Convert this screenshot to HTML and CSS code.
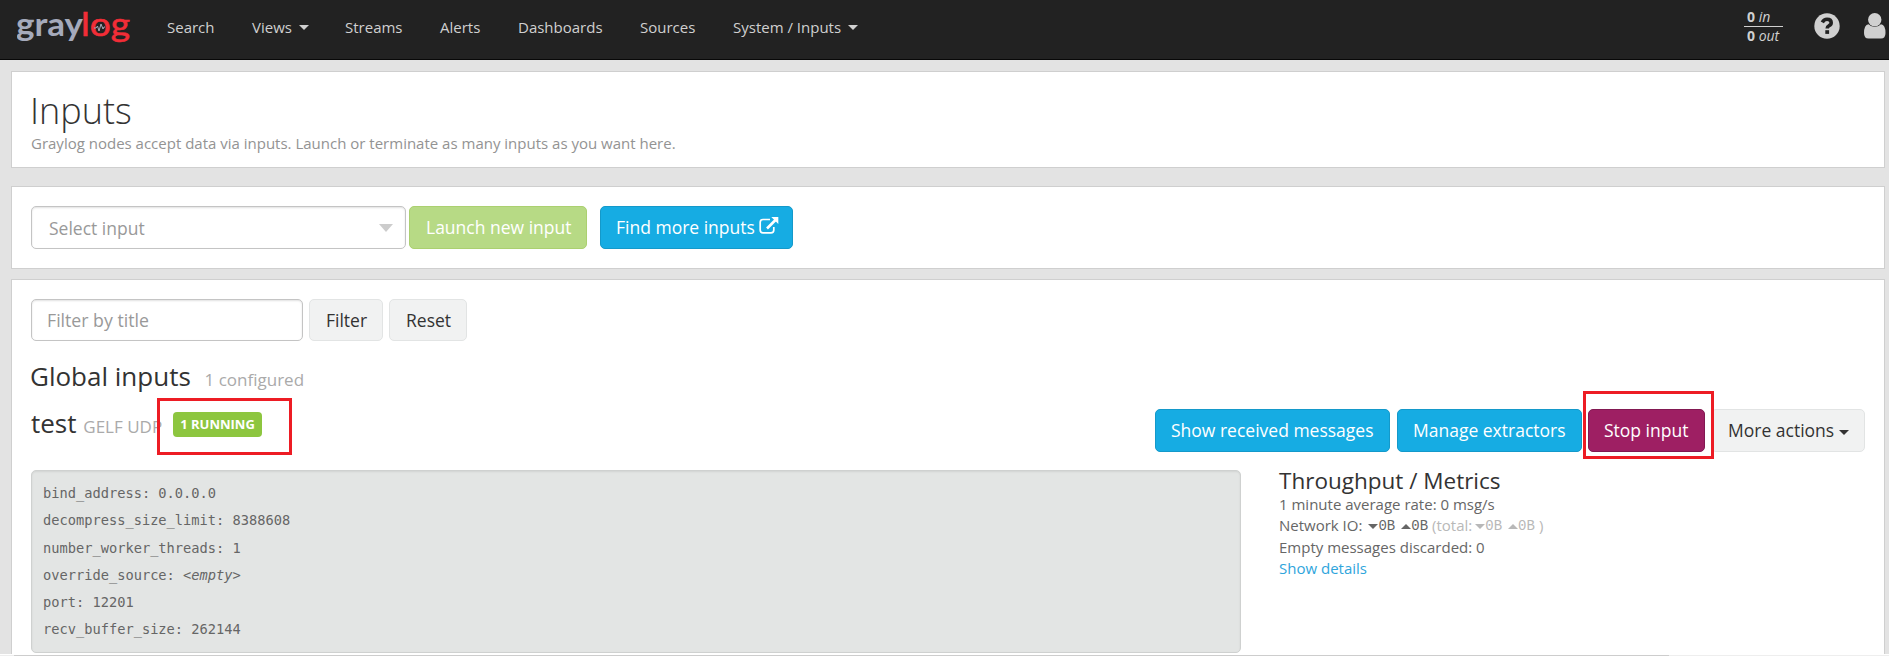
FILE: index.html
```html
<!DOCTYPE html>
<html lang="en">
<head>
<meta charset="utf-8">
<title>Inputs</title>
<link rel="stylesheet" href="styles.css">
</head>
<body>
<nav class="navbar">
  <a class="brand">
    <svg class="logo" width="124" height="46" viewBox="0 0 124 46">
      <text class="logo-gray" x="-1" y="36" textLength="67" lengthAdjust="spacingAndGlyphs">gray</text>
      <text class="logo-red" x="64" y="36" textLength="49" lengthAdjust="spacingAndGlyphs">log</text>
      <path class="pulse" d="M77 28h2l1.500-2 1.500 5 2-7 2 5 1-2h1"/>
    </svg>
  </a>
  <ul class="nav">
    <li class="w-search">Search</li>
    <li class="w-views">Views<span class="caret"></span></li>
    <li class="w-streams">Streams</li>
    <li class="w-alerts">Alerts</li>
    <li class="w-dash">Dashboards</li>
    <li class="w-sources">Sources</li>
    <li>System / Inputs<span class="caret"></span></li>
  </ul>
  <div class="throughput">
    <div class="rate rate-in"><b>0</b> <i>in</i></div>
    <div class="rate"><b>0</b> <i>out</i></div>
  </div>
  <svg class="help" width="26" height="26" viewBox="0 0 26 26"><circle cx="13" cy="13" r="12.700" fill="#d0d0d0"/><path d="M8.300 9.300Q10 6.200 13 6.200Q17.200 6.200 17.200 9.700Q17.200 11.600 15 12.700Q13.200 13.700 13.200 15.500" fill="none" stroke="#222" stroke-width="3.600"/><rect x="11.300" y="17.200" width="3.800" height="3.700" fill="#222"/></svg>
  <svg class="user" width="22" height="26" viewBox="0 0 22 26"><path d="M4.500 11.200Q0 12 0 20Q0 25.500 4.500 25.500H17Q21.500 25.500 21.500 20Q21.500 12 17 11.200Q14.500 13.900 10.750 13.900T4.500 11.200Z" fill="#d0d0d0"/><circle cx="10.750" cy="6.700" r="6.700" fill="#d0d0d0"/></svg>
</nav>

<main class="content">
  <section class="panel panel-head">
    <h1>Inputs</h1>
    <p class="lead">Graylog nodes accept data via inputs. Launch or terminate as many inputs as you want here.</p>
  </section>

  <section class="panel panel-create">
    <div class="select"><span>Select input</span><span class="select-arrow"></span></div>
    <a class="btn btn-success">Launch new input</a>
    <a class="btn btn-info btn-find">Find more inputs
      <svg class="ext" width="20" height="18" viewBox="0 0 20 18"><path d="M11 2.500H4Q1.200 2.500 1.200 5.300V13Q1.200 15.800 4 15.800H12Q14.800 15.800 14.800 13V10" fill="none" stroke="#fff" stroke-width="1.700"/><path d="M8 11.500L16.500 3" stroke="#fff" stroke-width="2.600"/><path d="M12.300 0H19.300V7Z" fill="#fff"/></svg>
    </a>
  </section>

  <section class="panel panel-list">
    <div class="filter">
      <div class="input">Filter by title</div>
      <a class="btn btn-default btn-filter">Filter</a>
      <a class="btn btn-default btn-reset">Reset</a>
    </div>
    <h2 class="group">Global inputs <small>1 configured</small></h2>
    <div class="entry">
      <h2 class="title">test <small>GELF UDP</small></h2>
      <span class="label">1 RUNNING</span>
      <span class="mark mark-label"></span>
      <div class="actions">
        <a class="btn btn-info btn-show">Show received messages</a>
        <a class="btn btn-info btn-manage">Manage extractors</a>
        <a class="btn btn-primary">Stop input</a>
        <a class="btn btn-default btn-more">More actions<span class="caret"></span></a>
        <span class="mark mark-stop"></span>
      </div>
    </div>
    <div class="details">
      <ul class="config">
        <li>bind_address: 0.0.0.0</li>
        <li>decompress_size_limit: 8388608</li>
        <li>number_worker_threads: 1</li>
        <li>override_source: <i>&lt;empty&gt;</i></li>
        <li>port: 12201</li>
        <li>recv_buffer_size: 262144</li>
      </ul>
      <div class="metrics">
        <h3>Throughput / Metrics</h3>
        <p>1 minute average rate: 0 msg/s</p>
        <p class="io"><span class="io-name">Network IO:</span><span class="down"></span><code>0B</code><span class="up"></span><code>0B</code><span class="total"><span class="total-name">(total:</span><span class="down"></span><code>0B</code><span class="up"></span><code>0B</code><span class="close">)</span></span></p>
        <p>Empty messages discarded: 0</p>
        <p><a class="link">Show details</a></p>
      </div>
    </div>
  </section>
</main>
<div class="scroll"><div class="scroll-track"><div class="scroll-thumb"></div></div></div>
</body>
</html>
```

FILE: styles.css
```css
* { box-sizing: border-box; }
body {
  margin: 0;
  height: 656px;
  overflow: hidden;
  display: flex;
  flex-direction: column;
  background: #e3e3e3;
  color: #666;
  font: 15px/21.4px "Open Sans", sans-serif;
}
h1, h2, h3, p, ul { margin: 0; padding: 0; font-weight: 400; }
ul { list-style: none; }

.navbar {
  flex: none;
  height: 60px;
  display: flex;
  background: #222;
  border-bottom: 1px solid #080808;
  color: #d0d0d0;
}
.brand { width: 167px; padding-left: 17px; }
.logo { display: block; }
.logo text { font: 700 33px Lato, sans-serif; }
.logo .logo-gray { fill: #a5aabb; }
.logo .logo-red { fill: #f22d37; font-weight: 400; stroke: #f22d37; stroke-width: .6px; }
.pulse { fill: none; stroke: #a5aabb; stroke-width: 1; }
.nav { display: flex; width: 1576px; padding-top: 17px; }
.nav li { white-space: nowrap; }
.w-search { width: 85px; }
.w-views { width: 93px; }
.w-streams { width: 95px; }
.w-alerts { width: 78px; }
.w-dash { width: 122px; }
.w-sources { width: 93px; }
.caret {
  display: inline-block;
  border: 5px solid transparent;
  border-top-color: currentColor;
  border-bottom: 0;
  margin-left: 7px;
  vertical-align: 3px;
}
.throughput { width: 41px; margin-left: 1px; padding-top: 8px; font-size: 14px; line-height: 18px; }
.rate { padding-left: 3px; width: 39px; height: 17px; white-space: nowrap; }
.rate-in { height: 19px; border-bottom: 1px solid #d0d0d0; }
.help { flex: none; margin: 13px 0 0 29px; }
.user { flex: none; margin: 13px 0 0 24px; }

.content { flex: 1; padding: 11px 4px 0 11px; display: flex; flex-direction: column; min-height: 0; }
.panel { flex: none; background: #fff; border: 1px solid #cfcfcf; padding: 19px; }
.panel-head { height: 97px; margin-bottom: 18px; }
h1 { color: #333; font-size: 36px; line-height: 40px; font-weight: 340; margin-left: -1px; }
.lead { color: #939393; margin-top: 2px; }
.panel-create { height: 83px; margin-bottom: 10px; display: flex; }
.select {
  width: 375px;
  height: 43px;
  border: 1px solid #c4c4c4;
  border-radius: 5px;
  box-shadow: inset 0 1px 2px rgba(0,0,0,.12);
  display: flex;
  justify-content: space-between;
  align-items: center;
  padding: 2px 12px 0 17px;
  color: #999;
  font-size: 17.500px;
}
.select-arrow { border: 7px solid transparent; border-top: 8px solid #ccc; border-bottom: 0; margin-top: -2px; }
.btn {
  display: block;
  height: 43px;
  border: 1px solid;
  border-radius: 5px;
  padding: 0 15px;
  font-size: 17.500px;
  line-height: 41px;
  color: #fff;
  white-space: nowrap;
}
.btn-success { background: #b7da85; border-color: #abd070; margin-left: 3px; width: 178px; padding-left: 16px; }
.btn-info { background: #16ace3; border-color: #1499ca; }
.btn-find { width: 193px; margin-left: 13px; }
.ext { vertical-align: -1px; margin-left: 0; }
.btn-default { background: #f1f2f2; border-color: #e2e4e4; color: #333; }
.btn-primary { background: #9e1f63; border-color: #821952; width: 117px; margin-left: 6px; }

.panel-list { height: 390px; }
.filter { display: flex; }
.input {
  width: 272px;
  height: 42px;
  border: 1px solid #c4c4c4;
  border-radius: 5px;
  box-shadow: inset 0 1px 2px rgba(0,0,0,.12);
  padding-left: 15px;
  font-size: 17.700px;
  line-height: 41px;
  color: #999;
}
.filter .btn { height: 42px; margin-left: 6px; padding-left: 16px; }
.btn-filter { width: 74px; }
.btn-reset { width: 78px; }
h2 { color: #333; font-size: 26px; line-height: 30px; white-space: nowrap; }
h2 small { font-size: 17px; color: #aaa; }
.group { margin: 20px 0 0 -1px; }
.group small { margin-left: 7px; }
.entry { display: flex; margin-top: 15px; height: 42px; position: relative; }
.title { width: 142px; margin-top: -2px; }
.label {
  width: 89px;
  height: 25px;
  margin-top: 2px;
  border-radius: 4px;
  background: #8dc63f;
  color: #fff;
  font-size: 13px;
  font-weight: 700;
  line-height: 25px;
  text-align: center;
}
.actions { display: flex; margin: -1px 0 0 auto; position: relative; }
.btn-show { width: 235px; }
.btn-manage { width: 185px; margin-left: 7px; }
.btn-more { width: 154px; margin-left: 6px; padding-left: 16px; }
.btn-more .caret { margin-left: 5px; vertical-align: 2px; }
.mark { position: absolute; border: 3px solid #ed1c24; }
.mark-label { left: 126px; top: -12px; width: 135px; height: 57px; }
.mark-stop { left: 428px; top: -18px; width: 131px; height: 68px; }

.details { display: flex; margin-top: 18px; }
.config {
  width: 1210px;
  height: 183px;
  padding: 9px 11px;
  background: #e3e5e4;
  border: 1px solid #cfd1d0;
  border-radius: 5px;
  box-shadow: inset 0 1px 2px rgba(0,0,0,.08);
  font: 13.700px/27.300px "DejaVu Sans Mono", monospace;
}
.metrics { margin-left: 38px; }
.metrics h3 { color: #333; font-size: 22.500px; line-height: 26px; margin-top: -2px; }
.io { display: flex; align-items: center; }
.io code { font: 14px "Liberation Mono", monospace; }
.down, .up { border: 5px solid transparent; margin: 1px 0 0 6px; }
.down { border-top: 5px solid currentColor; border-bottom: 0; }
.up { border-bottom: 5px solid currentColor; border-top: 0; }
.total { display: flex; align-items: center; margin-left: 4px; color: #b8b8b8; }
.total-name + .down { margin-left: 3px; }
.close { margin-left: 4px; }
.link { color: #2fa5dc; }
.scroll { flex: none; height: 2px; background: #fff; padding-top: 1px; }
.scroll-track { background: #eee; }
.scroll-thumb { height: 1px; width: 1655px; margin-left: 14px; background: #cdcdcd; }
```
